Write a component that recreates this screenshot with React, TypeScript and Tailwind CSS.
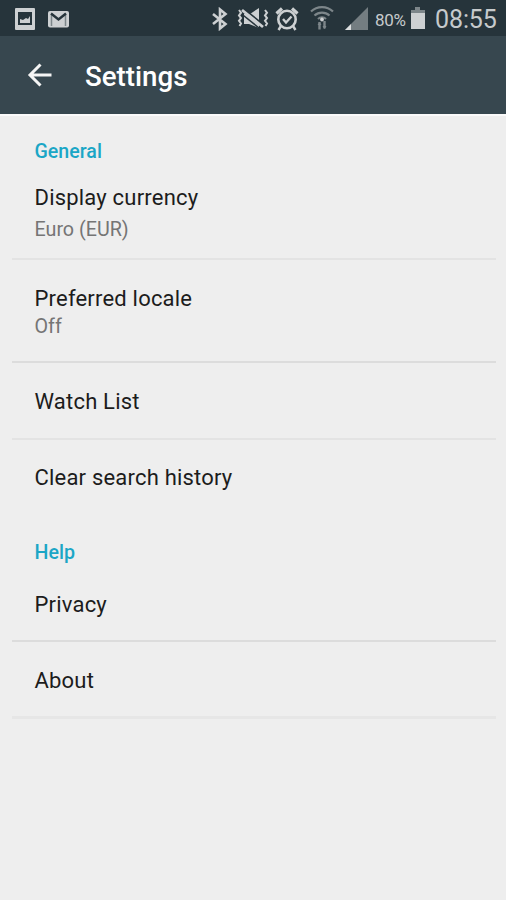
import React from "react";

type RowProps = {
    title: string;
    value?: string;
    className: string;
    valueClassName?: string;
};

const Row = ({ title, value, className, valueClassName }: RowProps) => {
    return (
        <li className={`ml-3 mr-[10px] pl-[22.5px] ${className}`}>
            <h3 className="text-[22px] leading-[26px] tracking-[0.2px] text-[#1c1c1c]">{title}</h3>
            {value && (
                <p className={`text-[19.7px] leading-[22px] text-[#757575] ${valueClassName}`}>{value}</p>
            )}
        </li>
    );
};

const StatusBar = () => {
    return (
        <div className="h-[36px] bg-[#26343b] flex items-center text-[#c6cacc]">
            <svg className="ml-[14px] mt-[1px] w-[22px] h-[24px]" viewBox="0 0 22 24">
                <path fill="#cdd0d2" fillRule="evenodd" d="M2 1h18a1 1 0 0 1 1 1v20a1 1 0 0 1-1 1H2a1 1 0 0 1-1-1V2a1 1 0 0 1 1-1zm2 4v13h14V5z" />
                <path fill="#cdd0d2" d="M6 16v-4l3 1 3-2 2 1 2-3v7z" />
            </svg>
            <svg className="ml-[11px] mt-[1px] w-[24px] h-[20px]" viewBox="0 0 24 20">
                <rect x="1" y="2" width="21" height="16.500" rx="2" fill="#cdd0d2" />
                <path d="M4.500 17V6M18.500 6v11" fill="none" stroke="#7d868a" strokeWidth="1.500" />
                <path d="M4 4.500l7.500 6L19 4.500" fill="none" stroke="#26343b" strokeWidth="2.500" />
            </svg>
            <svg className="ml-[140px] mt-[1px] w-[18px] h-[24px]" viewBox="0 0 18 24">
                <path d="M2 7l12.500 10L9 21.500v-19L14.500 7 2 17" fill="none" stroke="#cdd0d2" strokeWidth="2.600" />
            </svg>
            <svg className="ml-[7px] w-[34px] h-[24px]" viewBox="0 0 34 24">
                <path fill="#cdd0d2" d="M8 8h6l9-6v20l-10-4H8z" />
                <path d="M6.500 2L29 20" stroke="#26343b" strokeWidth="2" />
                <path d="M6 4l21 17" stroke="#cdd0d2" strokeWidth="2.800" />
                <path d="M5 7.500l18 14.500" stroke="#26343b" strokeWidth="1.500" />
                <path d="M3 4l2 2.700-2 2.700 2 2.700-2 2.700 2 2.700-1.500 2.500M29 4l2 2.700-2 2.700 2 2.700-2 2.700 2 2.700-1.500 2.500" fill="none" stroke="#cdd0d2" strokeWidth="2" />
            </svg>
            <svg className="ml-[5px] mt-[1px] w-[24px] h-[26px]" viewBox="0 0 24 26">
                <circle cx="12" cy="13.500" r="8.700" fill="none" stroke="#cdd0d2" strokeWidth="2.600" />
                <path d="M8 13l3 3.500 5.500-6M6 20l-2.500 4M18 20l2.500 4" fill="none" stroke="#cdd0d2" strokeWidth="2.400" />
                <path d="M1.500 7.500L7 2.500M17 2.500l5.500 5" stroke="#cdd0d2" strokeWidth="3.200" />
            </svg>
            <svg className="ml-[11px] w-[24px] h-[26px]" viewBox="0 0 24 26">
                <path d="M1 6.500a16 16 0 0 1 22 0M4.500 10.500a11 11 0 0 1 15 0M8 14a6 6 0 0 1 8 0" fill="none" stroke="#7d868a" strokeWidth="2.200" />
                <circle cx="12" cy="14.500" r="1.900" fill="#cdd0d2" />
                <path d="M9.500 17v7.500M14.500 16v7.500" stroke="#7d868a" strokeWidth="2.400" />
                <path d="M7.500 20l2-3 2 3zM12.500 21l2 3 2-3z" fill="#7d868a" />
            </svg>
            <svg className="ml-[10px] w-[25px] h-[25px]" viewBox="0 0 25 25">
                <path d="M24 1v23H1z" fill="#747d81" />
                <path d="M7 18v6H1z" fill="#dcdedf" />
            </svg>
            <span className="ml-[6px] w-[35px] mt-[3px] text-[17px] leading-5 tracking-[-0.3px]">80%</span>
            <svg className="w-[16px] h-[24px]" viewBox="0 0 16 24">
                <path d="M5 1h5v3h5v4H1V4h4z" fill="#7d868a" />
                <path d="M1 7h14v16H1z" fill="#cdd0d2" />
            </svg>
            <span className="ml-[9px] mt-[4px] text-[25px] leading-[30px] tracking-[-0.1px]">08:55</span>
        </div>
    );
};

const App = () => {
    return (
        <div className="w-[506px] h-[900px] overflow-hidden bg-[#eeeeee] font-['Roboto','Liberation_Sans',sans-serif]">
            <StatusBar />
            <header className="h-[78px] bg-[#37474f] flex items-center">
                <svg className="ml-[27px] w-[26px] h-[26px]" viewBox="0 0 26 26">
                    <path d="M24.500 13H3M13.500 2.500L3 13l10.500 10.500" fill="none" stroke="#f5f5f5" strokeWidth="3" />
                </svg>
                <h1 className="ml-[32px] mt-[3px] text-[27.7px] leading-[30px] font-medium text-white">Settings</h1>
            </header>
            <main className="border-t-2 border-[#fafafa]">
                <h2 className="pt-[25px] pl-[34.5px] text-[19.6px] leading-[22px] font-medium text-[#1ba6c6]">General</h2>
                <ul>
                    <Row title="Display currency" value="Euro (EUR)" className="h-[97px] pt-[22px] border-b-2 border-[#e3e3e3]" valueClassName="mt-[8px]" />
                    <Row title="Preferred locale" value="Off" className="h-[103px] pt-[26px] border-b-2 border-[#dcdcdc]" valueClassName="mt-[4px]" />
                    <Row title="Watch List" className="h-[77px] pt-[26px] border-b-2 border-[#e3e3e3]" />
                    <Row title="Clear search history" className="h-[75px] pt-[25px]" />
                </ul>
                <h2 className="pt-[27px] pl-[34.5px] text-[19.6px] leading-[22px] font-medium text-[#1ba6c6]">Help</h2>
                <ul>
                    <Row title="Privacy" className="h-[78px] pt-[28px] border-b-2 border-[#dcdcdc]" />
                    <Row title="About" className="h-[77px] pt-[26px] border-b-[3px] border-[#e6e6e6]" />
                </ul>
            </main>
        </div>
    );
};

export default App;
